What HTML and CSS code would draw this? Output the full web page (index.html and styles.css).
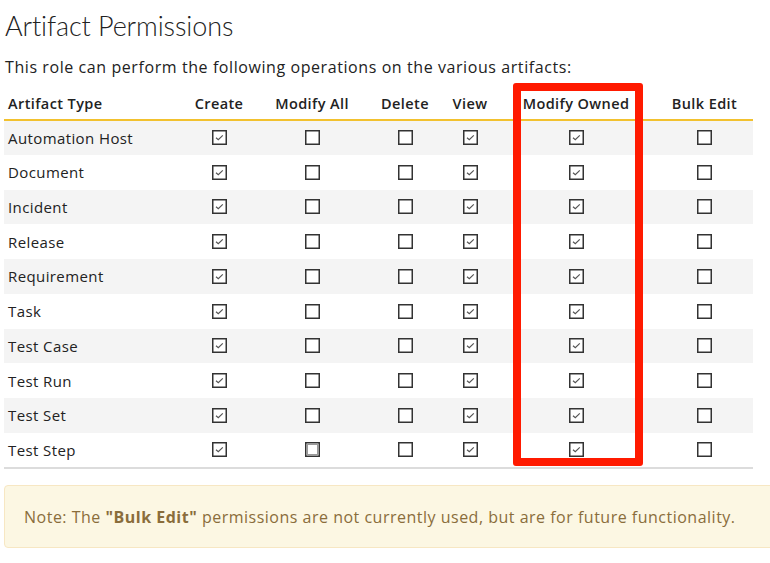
FILE: index.html
```html
<!DOCTYPE html>
<html>
<head>
<meta charset="utf-8">
<link rel="stylesheet" href="styles.css">
</head>
<body>
<div class="page">
  <h1 class="title">Artifact Permissions</h1>
  <p class="intro">This role can perform the following operations on the various artifacts:</p>
  <div class="table-wrap">
    <table class="perm">
      <colgroup>
        <col class="c-type"><col class="c-create"><col class="c-modall"><col class="c-delete"><col class="c-view"><col class="c-modown"><col class="c-bulk">
      </colgroup>
      <thead>
        <tr><th class="left">Artifact Type</th><th>Create</th><th>Modify All</th><th>Delete</th><th>View</th><th>Modify Owned</th><th>Bulk Edit</th></tr>
      </thead>
      <tbody id="rows"></tbody>
    </table>
    <div class="highlight"></div>
  </div>
  <div class="note">Note: The <b>"Bulk Edit"</b> permissions are not currently used, but are for future functionality.</div>
</div>
<script>
  var names = ["Automation Host","Document","Incident","Release","Requirement","Task","Test Case","Test Run","Test Set","Test Step"];
  var checked = '<svg class="cb" width="15" height="15" viewBox="0 0 15 15"><rect x="0.75" y="0.75" width="13.5" height="13.5" fill="#fff" stroke="#333" stroke-width="1.5"/><path d="M4 7.8 L6.3 9.8 L10.8 5.4" fill="none" stroke="#555" stroke-width="1.2"/></svg>';
  var empty = '<svg class="cb" width="15" height="15" viewBox="0 0 15 15"><rect x="0.75" y="0.75" width="13.5" height="13.5" fill="#fff" stroke="#333" stroke-width="1.5"/></svg>';
  var dotted = '<svg class="cb" width="15" height="15" viewBox="0 0 15 15"><rect x="0.75" y="0.75" width="13.5" height="13.5" fill="#fff" stroke="#333" stroke-width="1.5"/><rect x="2.5" y="2.5" width="10" height="10" fill="none" stroke="#333" stroke-width="1" stroke-dasharray="1 1"/></svg>';
  var html = "";
  names.forEach(function(n, i){
    var mod = (i === 9) ? dotted : empty;
    html += '<tr><td class="left">' + n + '</td><td>' + checked + '</td><td>' + mod + '</td><td>' + empty + '</td><td>' + checked + '</td><td>' + checked + '</td><td>' + empty + '</td></tr>';
  });
  document.getElementById("rows").innerHTML = html;
</script>
</body>
</html>
```
FILE: styles.css
```css
* { box-sizing: border-box; }
html, body { margin: 0; padding: 0; background: #fff; }
body { font-family: "Open Sans", "Noto Sans", sans-serif; color: #222; overflow: hidden; }
.page { padding: 0 0 0 4px; width: 790px; }
.title {
  font-family: "Lato", "Open Sans", sans-serif;
  font-weight: 300;
  font-size: 27px;
  line-height: 36px;
  margin: 8px 0 0 1px;
  color: #222;
  letter-spacing: -0.1px;
}
.intro { font-size: 16px; line-height: 22px; margin: 12px 0 0 1px; color: #222; letter-spacing: 0.58px; }
.table-wrap { position: relative; width: 749px; margin-top: 10px; }
.perm { width: 749px; border-collapse: collapse; table-layout: fixed; border-bottom: 2px solid #dcdcdc; }
.c-type { width: 176px; }
.c-create { width: 78px; }
.c-modall { width: 108px; }
.c-delete { width: 78px; }
.c-view { width: 52px; }
.c-modown { width: 160px; }
.c-bulk { width: 97px; }
.perm th {
  font-size: 14.5px; font-weight: 600; color: #222; letter-spacing: 0.4px;
  height: 32px; padding: 0; text-align: center; vertical-align: middle;
  border-bottom: 2px solid #f2c12e;
}
.perm td { height: 34.75px; padding: 0; text-align: center; vertical-align: middle; font-size: 15px; color: #222; letter-spacing: 0.4px; }
.perm .left { text-align: left; padding-left: 4px; }
.perm tbody tr:nth-child(odd) td { background: #f4f4f4; }
.cb { display: block; margin: 0 auto; }
.highlight {
  position: absolute; left: 509px; top: -5px; width: 130px; height: 383px;
  border: 8px solid #ff1a00; border-radius: 3px; pointer-events: none;
}
.note {
  margin-top: 16px; height: 63px; width: 780px;
  background: #fcf7e3; border: 1px solid #f7e7c3; border-radius: 4px;
  color: #8a6d3b; font-size: 16px; line-height: 63px; padding-left: 19px; letter-spacing: 0.5px;
}
.note b { font-weight: 700; }
```
